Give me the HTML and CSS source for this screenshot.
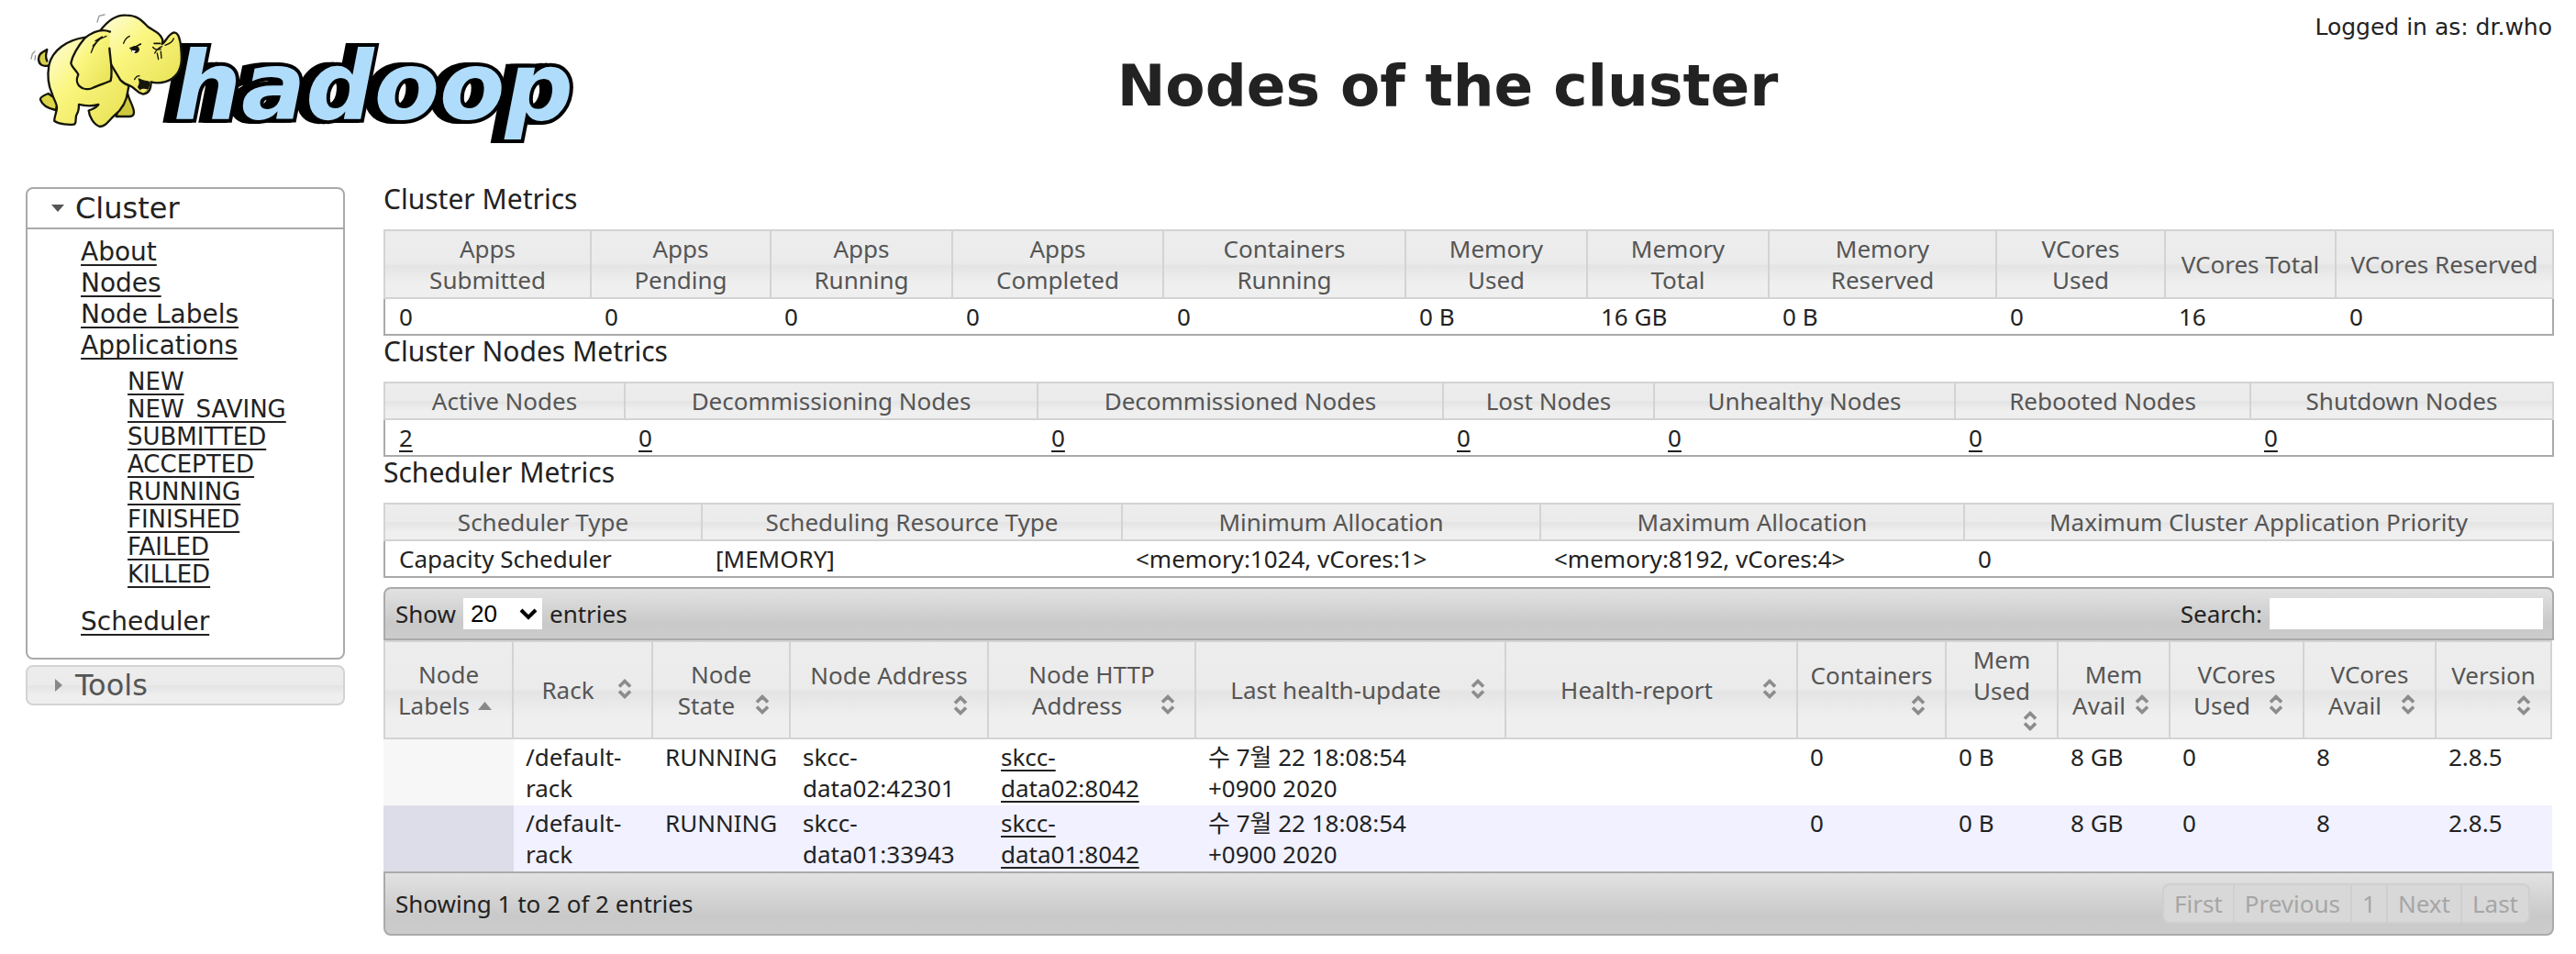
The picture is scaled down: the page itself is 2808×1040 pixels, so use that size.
FILE: index.html
```
<!DOCTYPE html>
<html lang="en">
<head>
<meta charset="utf-8">
<title>Nodes of the cluster</title>
<link rel="stylesheet" href="styles.css">
</head>
<body>
<svg class="sprite" aria-hidden="true">
  <symbol id="sort-both" viewBox="0 0 32 32"><path d="M10 13.500 16 7.500l6 6M10 18.500l6 6 6-6" fill="none" stroke="#8c8c8c" stroke-width="3.600"/></symbol>
  <symbol id="sort-asc" viewBox="0 0 32 32"><path d="M8 22 15.500 13 23 22z" fill="#888"/></symbol>
</svg>

<header class="header">
  <svg class="logo" viewBox="28 8 610 150" role="img" aria-label="Hadoop">
    <defs>
      <linearGradient id="skin" x1="0" y1="0" x2="1" y2="1">
        <stop offset="0" stop-color="#fffde0"/><stop offset=".4" stop-color="#faf67f"/><stop offset="1" stop-color="#e6df50"/>
      </linearGradient>
    </defs>
    <text class="wordmark" x="189" y="130">hadoop</text>
    <g transform="translate(30 8) scale(.3333)" stroke="#15150a" stroke-width="7" stroke-linejoin="round" stroke-linecap="round">
      <path fill="none" stroke="#999" stroke-width="4" d="M228 48l6-20 18-4M12 168l4-16 8-8M24 172l2-14"/>
      <path fill="#d8d04a" d="M70 190C48 196 36 186 36 168c0-16 14-22 28-30-4 16-6 24 0 38"/>
      <path fill="#dcd548" d="M68 282C52 288 40 294 42 302c6 18 22 28 50 34l10-30z"/>
      <path fill="#cfc83c" d="M326 275c4 28 22 48 22 68 0 10-4 14-14 14h-44l14-50z"/>
      <path fill="url(#skin)" d="M190 98C130 106 80 140 70 190c-6 36 0 70 10 92 6 20 16 32 16 46 0 14-10 34-8 44 16 10 48 14 66 10 8-8 0-24 8-34 6-10 6-22 6-30 16 4 44 6 64 0-6 12-20 14-32 20 2 20 16 44 36 52 22-2 28-18 48-36 24-20 40-44 44-80l10-50z"/>
      <path fill="url(#skin)" d="M238 76C262 44 292 24 322 26c36 0 52 16 72 38 22 14 40 20 48 42 0 8 0 10-2 14 14-6 18-34 40-38 14 2 16 18 20 34 6 50 6 76-10 100-20 28-56 36-86 28 0 20-4 38-26 40-20-4-24-18-40-26-14-4-24-10-34-20l-60-100z"/>
      <path fill="#15150a" stroke-width="4" d="M364 234c12 6 24 8 34 10 0 14-2 24-12 28-12 2-20-4-24-12 6-8 6-16 2-26z"/>
      <path fill="#f2eb6c" stroke="none" d="M368 270c8-6 18-4 24-2-6 10-18 12-24 2z"/>
      <path fill="url(#skin)" d="M270 80C240 68 214 80 188 100c-20 24-40 54-46 82 2 14 18 24 24 38-6 14-8 24 2 36 12 12 30 14 44 8 20-10 44-16 60-24 8-32-2-74-4-106"/>
      <path fill="none" stroke-width="4" d="M208 148c6-20 18-44 50-54M222 110l22-14M238 100l-24 26M314 118c4-12 10-20 20-24M350 236c4-8 10-12 16-12M416 150c6-12 14-18 24-22M410 130c4 8 16 10 26 6M424 150l4 20M436 144l2 22M450 124c12-4 24-10 28-22"/>
      <ellipse cx="352" cy="138" rx="14" ry="12" stroke="none" fill="#15150a"/>
      <path stroke="none" fill="#fff" d="M340 140l14 2-8 12z"/>
      <path fill="none" stroke-width="5" d="M336 134l16-4 18-10M414 118h20"/>
    </g>
  </svg>
  <h1 class="title">Nodes of the cluster</h1>
  <p class="user">Logged in as: dr.who</p>
</header>

<div class="layout">
  <nav class="sidebar" aria-label="Main">
    <section class="menu">
      <h3 class="menu-title"><svg class="arrow" viewBox="0 0 16 16" aria-hidden="true"><path d="M1 4h14L8 12z" fill="#555"/></svg>Cluster</h3>
      <ul class="menu-list">
        <li><a href="#about">About</a></li>
        <li><a href="#nodes">Nodes</a></li>
        <li><a href="#labels">Node Labels</a></li>
        <li><a href="#apps">Applications</a>
          <ul class="states">
            <li><a href="#new">NEW</a></li>
            <li><a href="#new-saving">NEW_SAVING</a></li>
            <li><a href="#submitted">SUBMITTED</a></li>
            <li><a href="#accepted">ACCEPTED</a></li>
            <li><a href="#running">RUNNING</a></li>
            <li><a href="#finished">FINISHED</a></li>
            <li><a href="#failed">FAILED</a></li>
            <li><a href="#killed">KILLED</a></li>
          </ul>
        </li>
        <li><a href="#scheduler">Scheduler</a></li>
      </ul>
    </section>
    <section class="menu closed">
      <h3 class="menu-title"><svg class="arrow" viewBox="0 0 16 16" aria-hidden="true"><path d="M5 1v14l8-7z" fill="#888"/></svg>Tools</h3>
    </section>
  </nav>

  <main class="content">
    <h2 class="caption">Cluster Metrics</h2>
    <table class="metrics apps">
      <colgroup><col><col><col><col><col><col><col><col><col><col><col></colgroup>
      <thead><tr><th>Apps<br>Submitted</th><th>Apps<br>Pending</th><th>Apps<br>Running</th><th>Apps<br>Completed</th><th>Containers<br>Running</th><th>Memory<br>Used</th><th>Memory<br>Total</th><th>Memory<br>Reserved</th><th>VCores<br>Used</th><th>VCores Total</th><th>VCores Reserved</th></tr></thead>
      <tbody><tr><td>0</td><td>0</td><td>0</td><td>0</td><td>0</td><td>0 B</td><td>16 GB</td><td>0 B</td><td>0</td><td>16</td><td>0</td></tr></tbody>
    </table>

    <h2 class="caption">Cluster Nodes Metrics</h2>
    <table class="metrics counts">
      <colgroup><col><col><col><col><col><col><col></colgroup>
      <thead><tr><th>Active Nodes</th><th>Decommissioning Nodes</th><th>Decommissioned Nodes</th><th>Lost Nodes</th><th>Unhealthy Nodes</th><th>Rebooted Nodes</th><th>Shutdown Nodes</th></tr></thead>
      <tbody><tr><td><a href="#active">2</a></td><td><a href="#decommissioning">0</a></td><td><a href="#decommissioned">0</a></td><td><a href="#lost">0</a></td><td><a href="#unhealthy">0</a></td><td><a href="#rebooted">0</a></td><td><a href="#shutdown">0</a></td></tr></tbody>
    </table>

    <h2 class="caption">Scheduler Metrics</h2>
    <table class="metrics scheduler">
      <colgroup><col><col><col><col><col></colgroup>
      <thead><tr><th>Scheduler Type</th><th>Scheduling Resource Type</th><th>Minimum Allocation</th><th>Maximum Allocation</th><th>Maximum Cluster Application Priority</th></tr></thead>
      <tbody><tr><td>Capacity Scheduler</td><td>[MEMORY]</td><td>&lt;memory:1024, vCores:1&gt;</td><td>&lt;memory:8192, vCores:4&gt;</td><td>0</td></tr></tbody>
    </table>

    <div class="bar bar-top">
      <label class="length">Show <select><option>20</option><option>40</option><option>60</option><option>80</option><option>100</option></select> entries</label>
      <label class="search">Search: <input type="text"></label>
    </div>
    <table class="nodes">
      <colgroup><col><col><col><col><col><col><col><col><col><col><col><col><col></colgroup>
      <thead>
        <tr>
          <th>Node<br>Labels<button class="sort" aria-label="Sort by labels"><svg><use href="#sort-asc"/></svg></button></th>
          <th>Rack<button class="sort" aria-label="Sort by rack"><svg><use href="#sort-both"/></svg></button></th>
          <th>Node<br>State<button class="sort" aria-label="Sort by state"><svg><use href="#sort-both"/></svg></button></th>
          <th>Node Address<br><button class="sort" aria-label="Sort by address"><svg><use href="#sort-both"/></svg></button></th>
          <th>Node HTTP<br>Address<button class="sort" aria-label="Sort by HTTP address"><svg><use href="#sort-both"/></svg></button></th>
          <th>Last health-update<button class="sort" aria-label="Sort by health update"><svg><use href="#sort-both"/></svg></button></th>
          <th>Health-report<button class="sort" aria-label="Sort by health report"><svg><use href="#sort-both"/></svg></button></th>
          <th>Containers<br><button class="sort" aria-label="Sort by containers"><svg><use href="#sort-both"/></svg></button></th>
          <th>Mem<br>Used<br><button class="sort" aria-label="Sort by memory used"><svg><use href="#sort-both"/></svg></button></th>
          <th>Mem<br>Avail<button class="sort" aria-label="Sort by memory available"><svg><use href="#sort-both"/></svg></button></th>
          <th>VCores<br>Used<button class="sort" aria-label="Sort by vcores used"><svg><use href="#sort-both"/></svg></button></th>
          <th>VCores<br>Avail<button class="sort" aria-label="Sort by vcores available"><svg><use href="#sort-both"/></svg></button></th>
          <th>Version<br><button class="sort" aria-label="Sort by version"><svg><use href="#sort-both"/></svg></button></th>
        </tr>
      </thead>
      <tbody>
        <tr><td></td><td>/default-<br>rack</td><td>RUNNING</td><td>skcc-<br>data02:42301</td><td><a href="#data02">skcc-<br>data02:8042</a></td><td>수 7월 22 18:08:54<br>+0900 2020</td><td></td><td>0</td><td>0 B</td><td>8 GB</td><td>0</td><td>8</td><td>2.8.5</td></tr>
        <tr><td></td><td>/default-<br>rack</td><td>RUNNING</td><td>skcc-<br>data01:33943</td><td><a href="#data01">skcc-<br>data01:8042</a></td><td>수 7월 22 18:08:54<br>+0900 2020</td><td></td><td>0</td><td>0 B</td><td>8 GB</td><td>0</td><td>8</td><td>2.8.5</td></tr>
      </tbody>
    </table>
    <div class="bar bar-bottom">
      <span>Showing 1 to 2 of 2 entries</span>
      <div class="pager"><button disabled>First</button><button disabled>Previous</button><button disabled>1</button><button disabled>Next</button><button disabled>Last</button></div>
    </div>
  </main>
</div>
</body>
</html>
```
FILE: styles.css
```
* { box-sizing: border-box; }

body {
  margin: 0;
  padding: 0 24px 20px 28px;
  background: #fff;
  color: #222;
  font: 26px/34px "Noto Sans", "Noto Sans CJK KR", sans-serif;
}

a {
  color: inherit;
  text-decoration: underline;
  text-decoration-thickness: 2px;
  text-decoration-skip-ink: none;
  text-underline-offset: 4px;
}

.sprite { display: none; }

/* Header */
.header {
  display: grid;
  grid-template-columns: 344px 1fr;
  min-height: 200px;
  font-family: "DejaVu Sans", sans-serif;
}

.logo {
  grid-area: 1 / 1 / 2 / 3;
  width: 610px;
  height: 150px;
  margin-top: 8px;
}

.wordmark {
  fill: #afdcfb;
  stroke: #000;
  stroke-width: 8px;
  stroke-linejoin: miter;
  stroke-miterlimit: 3;
  paint-order: stroke;
  font: italic bold 104px "DejaVu Sans", sans-serif;
  filter: drop-shadow(-5px 0 0 #000) drop-shadow(-5px 0 0 #000);
}

.title {
  grid-area: 1 / 2 / 2 / 3;
  margin: 58px 0 0;
  text-align: center;
  font-size: 63px;
  line-height: 72px;
}

.user {
  grid-area: 1 / 2 / 2 / 3;
  justify-self: end;
  align-self: start;
  margin: 15px 2px 0 0;
  font-size: 25px;
  line-height: 30px;
}

/* Page columns */
.layout {
  display: grid;
  grid-template-columns: 348px minmax(0, 1fr);
  gap: 42px;
  align-items: start;
}

/* Sidebar */
.sidebar {
  display: grid;
  gap: 6px;
  padding-top: 4px;
  font-family: "DejaVu Sans", sans-serif;
}

.menu {
  border: 2px solid #aaa;
  border-radius: 8px;
}

.menu-title {
  display: flex;
  align-items: center;
  gap: 11px;
  margin: 0;
  padding-left: 25px;
  border-bottom: 2px solid #aaa;
  font-size: 32px;
  font-weight: normal;
  line-height: 42px;
}

.arrow { width: 16px; height: 16px; }

.closed {
  border-color: #d3d3d3;
  background: linear-gradient(#ededed, #ebebeb 49%, #e4e4e4 52%, #efefef 78%);
}

.closed .menu-title {
  border: 0;
  color: #555;
  line-height: 40px;
}

.menu-list, .states {
  margin: 0;
  padding: 0;
  list-style: none;
}

.menu-list {
  padding: 8px 0 22px 58px;
  font-size: 28px;
}

.states {
  margin: 7px 0 20px;
  padding-left: 51px;
  font-size: 26px;
  line-height: 30px;
}

/* Shared table parts */
.caption {
  margin: 0 0 16px;
  font-size: 30px;
  font-weight: normal;
  line-height: 34px;
}

table {
  width: 100%;
  table-layout: fixed;
}

th, td {
  padding: 2px 13px;
  text-align: left;
  vertical-align: top;
}

th {
  border: 2px solid #d3d3d3;
  background: linear-gradient(#ededed, #ebebeb 49%, #e4e4e4 52%, #efefef 78%);
  color: #555;
  font-weight: normal;
  text-align: center;
  vertical-align: middle;
  white-space: nowrap;
}

/* Metric tables */
.metrics {
  width: calc(100% - 2px);
  border: 2px solid #aaa;
  border-collapse: collapse;
}

.metrics td { padding: 2px 15px; }

.apps col:nth-child(1) { width: 225px; }
.apps col:nth-child(2) { width: 196px; }
.apps col:nth-child(3) { width: 198px; }
.apps col:nth-child(4) { width: 230px; }
.apps col:nth-child(5) { width: 264px; }
.apps col:nth-child(6) { width: 198px; }
.apps col:nth-child(7) { width: 198px; }
.apps col:nth-child(8) { width: 248px; }
.apps col:nth-child(9) { width: 184px; }
.apps col:nth-child(10) { width: 186px; }
.apps col:nth-child(11) { width: 237px; }

.counts col:nth-child(1) { width: 262px; }
.counts col:nth-child(2) { width: 450px; }
.counts col:nth-child(3) { width: 442px; }
.counts col:nth-child(4) { width: 230px; }
.counts col:nth-child(5) { width: 328px; }
.counts col:nth-child(6) { width: 322px; }
.counts col:nth-child(7) { width: 330px; }

.scheduler col:nth-child(1) { width: 346px; }
.scheduler col:nth-child(2) { width: 458px; }
.scheduler col:nth-child(3) { width: 456px; }
.scheduler col:nth-child(4) { width: 462px; }
.scheduler col:nth-child(5) { width: 642px; }

/* Nodes table */
.nodes {
  width: calc(100% - 2px);
  border-spacing: 0;
}

.nodes col:nth-child(1) { width: 142px; }
.nodes col:nth-child(2) { width: 152px; }
.nodes col:nth-child(3) { width: 150px; }
.nodes col:nth-child(4) { width: 216px; }
.nodes col:nth-child(5) { width: 226px; }
.nodes col:nth-child(6) { width: 338px; }
.nodes col:nth-child(7) { width: 318px; }
.nodes col:nth-child(8) { width: 162px; }
.nodes col:nth-child(9) { width: 122px; }
.nodes col:nth-child(10) { width: 122px; }
.nodes col:nth-child(11) { width: 146px; }
.nodes col:nth-child(12) { width: 144px; }
.nodes col:nth-child(13) { width: 126px; }

.nodes th + th { border-left: 0; }
.nodes td { padding: 2px 13px; }
.nodes tr:nth-child(even) td { background: #f1f1ff; }
.nodes td:first-child { background: #f7f7f7; }
.nodes tr:nth-child(even) td:first-child { background: #dddde9; }

.sort {
  float: right;
  width: 32px;
  height: 32px;
  padding: 0;
  border: 0;
  background: none;
}

.sort svg {
  display: block;
  width: 32px;
  height: 32px;
}

/* Toolbars */
.bar {
  display: flex;
  align-items: center;
  justify-content: space-between;
  padding: 10px 10px 10px 11px;
  border: 2px solid #aaa;
  background: linear-gradient(#e2e2e2, #c9c9c9 70%, #ccc);
}

.bar-top {
  margin-top: 10px;
  border-radius: 8px 8px 0 0;
}

.bar-bottom {
  padding: 11px 24px 11px 11px;
  border-radius: 0 0 8px 8px;
}

.length, .search {
  display: flex;
  align-items: center;
  gap: 8px;
}

.bar select {
  width: 86px;
  height: 34px;
  padding: 0 8px;
  border: 0;
  border-radius: 0;
  appearance: none;
  color: #000;
  font: 26px "Liberation Sans", sans-serif;
  background: #fff url("data:image/svg+xml,%3Csvg xmlns='http://www.w3.org/2000/svg' width='20' height='14'%3E%3Cpath d='M2 2l8 8 8-8' fill='none' stroke='%23000' stroke-width='4'/%3E%3C/svg%3E") no-repeat right 5px top 11px;
}

.bar input {
  width: 298px;
  height: 34px;
  border: 0;
  font: inherit;
}

.pager { display: flex; }

.pager button {
  height: 44px;
  padding: 0 11px;
  border: 2px solid #cfcfcf;
  border-left-width: 0;
  background: #d8d8d8;
  color: #a6a6a6;
  font: inherit;
}

.pager button:first-child {
  border-left-width: 2px;
  border-radius: 8px 0 0 8px;
}

.pager button:last-child { border-radius: 0 8px 8px 0; }
```
